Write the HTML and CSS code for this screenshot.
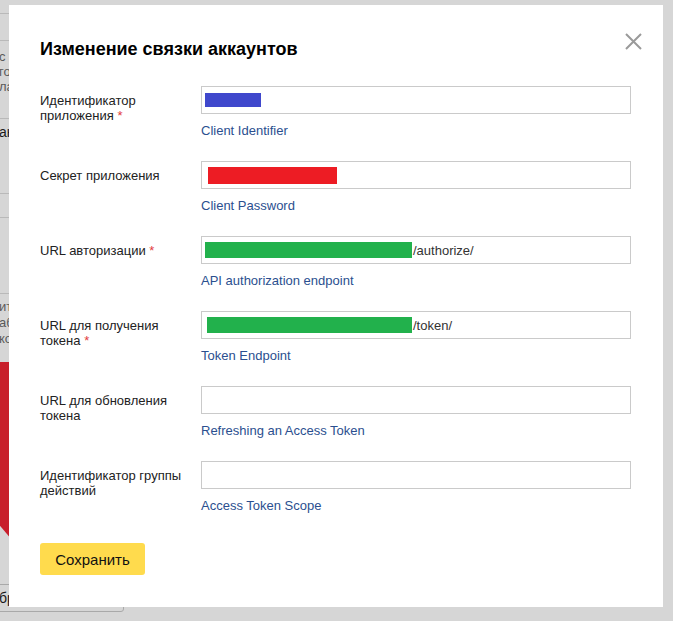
FILE: index.html
```html
<!DOCTYPE html>
<html lang="ru">
<head>
<meta charset="utf-8">
<title>Изменение связки аккаунтов</title>
<link rel="stylesheet" href="styles.css">
</head>
<body>
<div class="page">
  <div class="bg-row r1"></div>
  <div class="bg-row r2"></div>
  <div class="bg-row r3"><div class="bg-text muted">с в</div><div class="bg-text muted">го</div><div class="bg-text muted">ла</div></div>
  <div class="bg-row r4"><div class="bg-text dark">ан</div></div>
  <div class="bg-row r5"></div>
  <div class="bg-row r6"></div>
  <div class="r7">
    <div class="bg-text2 muted">ит</div><div class="bg-text2 muted">аб</div><div class="bg-text2 muted">ко</div>
  </div>
  <div class="red-shape"></div>
  <div class="bg-select">бр</div>
</div>

<div class="modal">
  <button class="close" aria-label="Закрыть">
    <svg width="17" height="17" viewBox="0 0 17 17"><path d="M1 1 L16 16 M16 1 L1 16" stroke="#9a9a9a" stroke-width="2" fill="none"/></svg>
  </button>
  <h1 class="title">Изменение связки аккаунтов</h1>

  <div class="row">
    <div class="label">Идентификатор<br>приложения <span class="req">*</span></div>
    <div class="field">
      <div class="input"><span class="mark blue"></span></div>
      <a class="hint">Client Identifier</a>
    </div>
  </div>

  <div class="row">
    <div class="label">Секрет приложения</div>
    <div class="field">
      <div class="input"><span class="mark red"></span></div>
      <a class="hint">Client Password</a>
    </div>
  </div>

  <div class="row">
    <div class="label">URL авторизации <span class="req">*</span></div>
    <div class="field">
      <div class="input"><span class="mark green g1"></span><span class="val">/authorize/</span></div>
      <a class="hint">API authorization endpoint</a>
    </div>
  </div>

  <div class="row">
    <div class="label">URL для получения<br>токена <span class="req">*</span></div>
    <div class="field">
      <div class="input"><span class="mark green g2"></span><span class="val">/token/</span></div>
      <a class="hint">Token Endpoint</a>
    </div>
  </div>

  <div class="row">
    <div class="label">URL для обновления<br>токена</div>
    <div class="field">
      <div class="input"></div>
      <a class="hint">Refreshing an Access Token</a>
    </div>
  </div>

  <div class="row">
    <div class="label">Идентификатор группы<br>действий</div>
    <div class="field">
      <div class="input"></div>
      <a class="hint">Access Token Scope</a>
    </div>
  </div>

  <button class="save">Сохранить</button>
</div>
</body>
</html>
```

FILE: styles.css
```css
html, body {
  margin: 0;
  padding: 0;
}
body {
  position: relative;
  width: 673px;
  height: 621px;
  overflow: hidden;
  background: #d6d6d6;
  font-family: "Liberation Sans", Arial, sans-serif;
}

/* background page under the overlay */
.page {
  width: 300px;
}
.bg-row {
  border-bottom: 1px solid #b9b9b9;
  box-sizing: content-box;
}
.r1 { height: 13px; }
.r2 { height: 26px; }
.r3 { height: 69px; padding-top: 8px; }
.r4 { height: 68px; padding-top: 6px; }
.r5 { height: 23px; }
.r6 { height: 75px; }
.r7 { padding-top: 5px; height: 63px; }
.bg-text {
  font-size: 13px;
  line-height: 15px;
  margin-left: -1px;
}
.bg-text2 {
  font-size: 13px;
  line-height: 16px;
  margin-left: -1px;
}
.dark { color: #1a1a1a; font-size: 14px; }
.muted { color: #5a5a5a; }
.red-shape {
  width: 12px;
  height: 178px;
  background: #c81f2b;
  clip-path: polygon(0 0, 100% 0, 100% 100%, 0 92%);
}
.bg-select {
  margin-top: 44px;
  margin-left: -6px;
  width: 124px;
  height: 26px;
  border: 1px solid #a9a9a9;
  border-radius: 3px;
  font-size: 14px;
  line-height: 26px;
  padding-left: 4px;
  color: #1a1a1a;
  box-sizing: content-box;
}

/* modal */
.modal {
  position: absolute;
  left: 9px;
  top: 5px;
  width: 654px;
  height: 602px;
  box-sizing: border-box;
  padding: 34px 0 0 31px;
  background: #fff;
}
.close {
  position: absolute;
  left: 616px;
  top: 28px;
  width: 17px;
  height: 17px;
  padding: 0;
  border: 0;
  background: none;
  display: block;
}
.close svg { display: block; }
.title {
  margin: 0 0 26px;
  font-size: 18px;
  line-height: 21px;
  font-weight: bold;
  color: #000;
}
.row {
  display: grid;
  grid-template-columns: 161px 430px;
  margin-bottom: 23px;
}
.label {
  padding-top: 7px;
  font-size: 13px;
  line-height: 15px;
  color: #222;
}
.req { color: #e23b3b; }
.field {
  display: flex;
  flex-direction: column;
  align-items: flex-start;
}
.input {
  width: 430px;
  height: 28px;
  box-sizing: border-box;
  border: 1px solid #cacaca;
  display: flex;
  align-items: center;
  padding-left: 3px;
  font-size: 13px;
  color: #333;
}
.mark { display: inline-block; }
.blue { width: 56px; height: 14px; background: #3f48cc; }
.red { width: 129px; height: 17px; background: #ed1c24; margin-left: 3px; }
.green { height: 16px; background: #22b14c; }
.g1 { width: 207px; }
.g2 { width: 205px; margin-left: 2px; }
.val { margin-left: 1px; }
.hint {
  margin-top: 9px;
  font-size: 13px;
  line-height: 15px;
  color: #2b4f8f;
  text-decoration: none;
}
.save {
  display: block;
  margin-top: 30px;
  width: 105px;
  height: 32px;
  border: 0;
  border-radius: 3px;
  background: #ffdb4d;
  font-family: "Liberation Sans", Arial, sans-serif;
  font-size: 15px;
  color: #111;
  padding: 0;
}
```
